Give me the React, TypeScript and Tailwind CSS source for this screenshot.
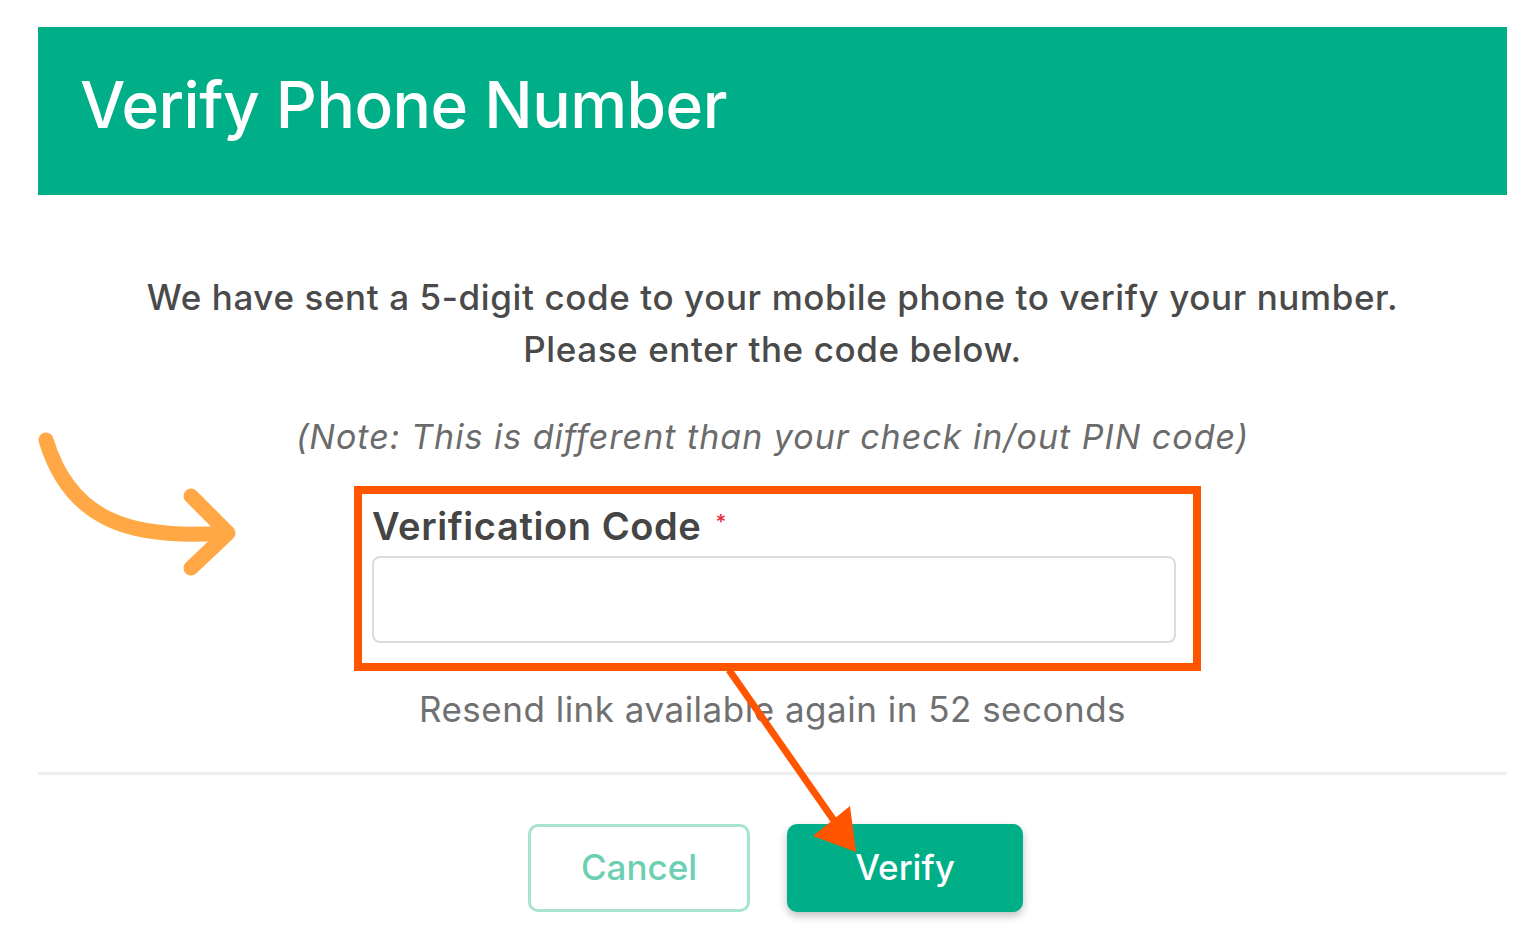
import { useState } from 'react'

export default function App() {
  const [code, setCode] = useState('')

  return (
    <div className="relative min-h-[945px] w-[1539px] bg-white font-['Inter',sans-serif]">
      <div className="ml-[38px] w-[1469px] pt-[27px]">
        {/* Header */}
        <div className="flex h-[168px] items-center bg-[#00ae87] pb-[12px] pl-[42px]">
          <h1 className="text-[64px] font-medium tracking-[-0.5px] text-white">Verify Phone Number</h1>
        </div>

        {/* Body */}
        <div className="flex flex-col items-center pt-[76px]">
          <p className="text-center text-[35px] leading-[52px] font-medium tracking-[0.6px] text-[#4a4a4a]">
            We have sent a 5-digit code to your mobile phone to verify your number.
            <br />
            Please enter the code below.
          </p>
          <p className="mt-[36px] text-[34px] italic tracking-[1px] text-[#6b6b6b]">
            (Note: This is different than your check in/out PIN code)
          </p>

          <div className="ml-[10px] mt-[24px] w-[847px] border-[8px] border-[#ff5500] pt-[8px] pb-[20px] pl-[10px] pr-[17px]">
            <label className="flex items-start text-[38px] leading-[48px] font-semibold tracking-[0.6px] text-[#454545]">
              Verification Code
              <span className="ml-[14px] mt-[10px] text-[20px] leading-none text-[#e8303a]">*</span>
            </label>
            <input
              value={code}
              onChange={(e) => setCode(e.target.value)}
              className="mt-[6px] block h-[87px] w-full rounded-[8px] border-2 border-[#dcdcdc] px-4 text-[32px] outline-none"
            />
          </div>

          <p className="mt-[12px] text-[35px] tracking-[0.5px] text-[#707070]">Resend link available again in 52 seconds</p>
        </div>

        <div className="mt-[36px] h-[3px] bg-[#eeeeee]" />

        {/* Footer */}
        <div className="flex justify-center gap-[37px] pt-[49px] pl-[6px]">
          <button className="h-[88px] w-[222px] rounded-[10px] border-[3px] border-[#a8e3d4] bg-white text-[35px] font-medium text-[#6ccfb3]">
            Cancel
          </button>
          <button className="h-[88px] w-[236px] rounded-[10px] bg-[#00ae87] text-[35px] font-medium text-white shadow-[0_4px_8px_rgba(0,0,0,0.25)]">
            Verify
          </button>
        </div>
      </div>

      {/* Annotation arrows */}
      <svg className="pointer-events-none absolute left-0 top-0" width="1539" height="945" viewBox="0 0 1539 945">
        <path d="M46 440 C 70 520, 130 540, 225 533" fill="none" stroke="#ffa845" strokeWidth="15" strokeLinecap="round" />
        <path d="M191 496 L 228 533 L 191 568" fill="none" stroke="#ffa845" strokeWidth="15" strokeLinecap="round" strokeLinejoin="round" />
        <line x1="729" y1="670" x2="835" y2="822" stroke="#ff5500" strokeWidth="7" />
        <polygon points="813,836 850,806 856,852" fill="#ff5500" />
      </svg>
    </div>
  )
}
